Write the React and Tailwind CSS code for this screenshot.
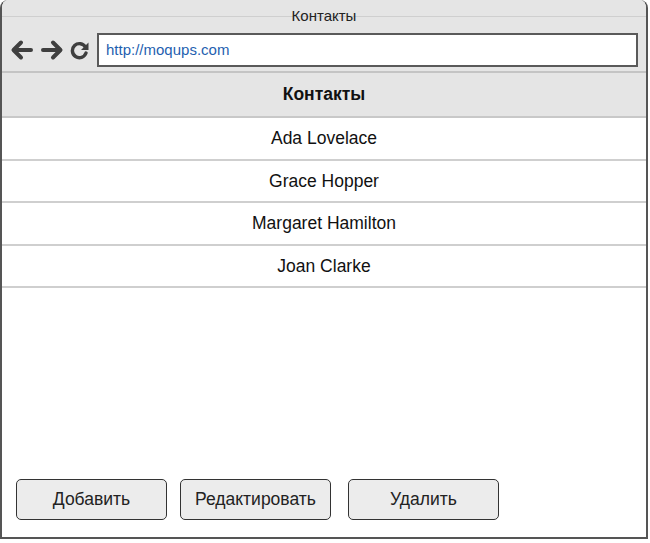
import React from 'react'

const contacts = ['Ada Lovelace', 'Grace Hopper', 'Margaret Hamilton', 'Joan Clarke']

function Back() {
  return (
    <svg width="24" height="22" viewBox="0 0 24 22" fill="none" stroke="#3f3f3f" strokeWidth="4" strokeLinecap="round" strokeLinejoin="round">
      <path d="M21 11H4M11 3.5L3.5 11L11 18.5" />
    </svg>
  )
}

function Forward() {
  return (
    <svg width="24" height="22" viewBox="0 0 24 22" fill="none" stroke="#3f3f3f" strokeWidth="4" strokeLinecap="round" strokeLinejoin="round">
      <path d="M3 11H20M13 3.5L20.5 11L13 18.5" />
    </svg>
  )
}

function Reload() {
  return (
    <svg width="20" height="20" viewBox="0 0 20 20" fill="none">
      <path d="M15.5 7.2A7 7 0 1 0 16 13" stroke="#3f3f3f" strokeWidth="3.4" strokeLinecap="round" />
      <path d="M18.5 2.5V10H11Z" fill="#3f3f3f" />
    </svg>
  )
}

export default function App() {
  return (
    <div className="w-[650px] h-[543px] bg-white" style={{ fontFamily: '"Liberation Sans", Arial, sans-serif' }}>
      <div className="w-[648px] h-[539px] flex flex-col border-x-2 border-b-2 border-[#555] rounded-t-[8px] overflow-hidden bg-white">
        {/* title bar */}
        <div className="h-[17px] bg-[#e5e5e5] border-b border-[#cfcfcf] flex justify-center">
          <span className="text-[15px] leading-[17px] mt-[7px] text-[#222] relative">Контакты</span>
        </div>
        {/* toolbar */}
        <div className="h-[56px] bg-[#e5e5e5] border-b-2 border-[#c4c4c4] flex items-end pb-[4px] pl-[8px] pr-[8px]">
          <div className="flex items-center gap-[6px] h-[34px]">
            <Back />
            <Forward />
            <Reload />
          </div>
          <div className="ml-[7px] flex-1 h-[34px] bg-white border-2 border-[#5a5a5a] flex items-center pl-[7px]">
            <span className="text-[15px] text-[#1f5fb0]">http://moqups.com</span>
          </div>
        </div>
        {/* list header */}
        <div className="h-[45px] bg-[#e5e5e5] border-b-2 border-[#c8c8c8] flex items-center justify-center">
          <span className="text-[17.5px] font-bold text-[#111]">Контакты</span>
        </div>
        {contacts.map(name => (
          <div key={name} className="h-[42.5px] border-b-2 border-[#cfcfcf] flex items-center justify-center">
            <span className="text-[17.5px] text-[#111]">{name}</span>
          </div>
        ))}
        <div className="flex-1 flex items-end pb-[17px] pl-[14px]">
          <div className="flex">
            <button className="w-[151px] h-[41px] rounded-[5px] border-[1.5px] border-[#333] bg-[#ececec] text-[17.5px] text-[#222]">Добавить</button>
            <button className="ml-[13px] w-[151px] h-[41px] rounded-[5px] border-[1.5px] border-[#333] bg-[#ececec] text-[17.5px] text-[#222]">Редактировать</button>
            <button className="ml-[17px] w-[151px] h-[41px] rounded-[5px] border-[1.5px] border-[#333] bg-[#ececec] text-[17.5px] text-[#222]">Удалить</button>
          </div>
        </div>
      </div>
    </div>
  )
}
